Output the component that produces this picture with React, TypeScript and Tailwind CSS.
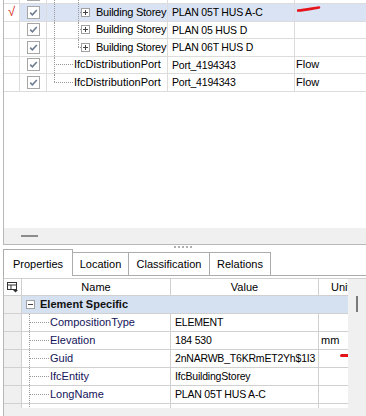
import React from "react";

type TreeRow = {
  kind: "storey" | "port" | "top";
  name: string;
  value: string;
  type: string;
  selected?: boolean;
  lastPort?: boolean;
  lastStorey?: boolean;
};

const treeRows: TreeRow[] = [
  { kind: "top", name: "", value: "", type: "" },
  { kind: "storey", name: "Building Storey", value: "PLAN 05T HUS A-C", type: "", selected: true },
  { kind: "storey", name: "Building Storey", value: "PLAN 05 HUS D", type: "" },
  { kind: "storey", name: "Building Storey", value: "PLAN 06T HUS D", type: "", lastStorey: true },
  { kind: "port", name: "IfcDistributionPort", value: "Port_4194343", type: "Flow" },
  { kind: "port", name: "IfcDistributionPort", value: "Port_4194343", type: "Flow", lastPort: true },
];

const props = [
  { name: "CompositionType", value: "ELEMENT", unit: "" },
  { name: "Elevation", value: "184 530", unit: "mm" },
  { name: "Guid", value: "2nNARWB_T6KRmET2Yh$1I3", unit: "" },
  { name: "IfcEntity", value: "IfcBuildingStorey", unit: "" },
  { name: "LongName", value: "PLAN 05T HUS A-C", unit: "" },
  { name: "", value: "", unit: "" },
];

function CheckBox() {
  return (
    <svg width="13" height="13" viewBox="0 0 13 13">
      <rect x="0.5" y="0.5" width="12" height="12" fill="#fff" stroke="#a6a6a6" />
      <path d="M3.2 6.6 L5.4 8.8 L9.8 3.9" fill="none" stroke="#6d7b90" strokeWidth="1.5" />
    </svg>
  );
}

function ExpandBox({ minus }: { minus?: boolean }) {
  return (
    <svg width="9" height="9" viewBox="0 0 9 9">
      <rect x="0.5" y="0.5" width="8" height="8" fill="#fff" stroke="#a0a0a0" />
      <path d="M2 4.5 H7" stroke="#444" />
      {!minus && <path d="M4.5 2 V7" stroke="#444" />}
    </svg>
  );
}

function GridIcon() {
  return (
    <svg width="11" height="11" viewBox="0 0 11 11">
      <rect x="0.5" y="0.5" width="9" height="7" fill="#fff" stroke="#333" />
      <path d="M0.5 3 H9.5 M4 3 V7.5" stroke="#333" />
      <path d="M6 8 H11 L8.5 10.5 Z" fill="#333" />
    </svg>
  );
}

function NameCell({ row }: { row: TreeRow }) {
  return (
    <div className="relative w-[121px] h-full border-r border-[#dcdcdc] overflow-hidden">
      {/* main trunk */}
      <div
        className={`absolute left-[7px] top-0 border-l border-dotted border-[#9a9a9a] ${
          row.lastPort ? "h-1/2" : "h-full"
        }`}
      />
      {row.kind !== "port" && (
        <div
          className={`absolute left-[31px] top-0 border-l border-dotted border-[#9a9a9a] ${
            row.lastStorey ? "h-1/2" : "h-full"
          }`}
        />
      )}
      {row.kind === "storey" && (
        <div className="flex items-center h-full pl-[31px]">
          <div className="w-[3px] border-t border-dotted border-[#9a9a9a]" />
          <div className="flex items-center">
            <ExpandBox />
          </div>
          <span className="pl-[6px] whitespace-nowrap tracking-[-0.25px]">{row.name}</span>
        </div>
      )}
      {row.kind === "port" && (
        <div className="flex items-center h-full pl-[7px]">
          <div className="w-[19px] border-t border-dotted border-[#9a9a9a]" />
          <span className="pl-[1px] whitespace-nowrap">{row.name}</span>
        </div>
      )}
    </div>
  );
}

export default function App() {
  return (
    <div className="w-[366px] h-[416px] overflow-hidden bg-white text-[11px] leading-none text-black font-['Liberation_Sans',Arial,sans-serif]">
      {/* tree panel */}
      <div className="ml-[3px] h-[245px] flex flex-col border-l border-b border-[#b8b8b8]">
        <div className="flex-1 overflow-hidden">
          <div className="-mt-[13.5px]">
            {treeRows.map((row, i) => (
              <div key={i} className="flex h-[17.5px]">
                <div className="w-[16px] h-full border-r border-b border-[#dcdcdc] flex items-center justify-center">
                  {row.selected && (
                    <span className="text-[13px] text-[#d42a10] -mt-[1px]">√</span>
                  )}
                </div>
                <div
                  className={`flex flex-1 h-full border-b border-[#dcdcdc] ${
                    row.selected ? "bg-[#d9e3f3]" : ""
                  }`}
                >
                  <div className="w-[27px] h-full border-r border-[#dcdcdc] flex items-center pl-[7px]">
                    <CheckBox />
                  </div>
                  <NameCell row={row} />
                  <div className="w-[127px] h-full border-r border-[#dcdcdc] flex items-center pl-[4px] whitespace-nowrap text-[10.5px] tracking-[-0.2px]">
                    {row.value}
                  </div>
                  <div className="flex-1 h-full flex items-center pl-[1px] relative">
                    {row.type}
                    {row.selected && (
                      <svg className="absolute left-[2px] top-[1px]" width="24" height="8" viewBox="0 0 24 8">
                        <path d="M1 5.5 C8 5 15 3.5 22 2.5" stroke="#e5141b" strokeWidth="2.6" strokeLinecap="round" fill="none" />
                      </svg>
                    )}
                  </div>
                </div>
              </div>
            ))}
          </div>
        </div>
        <div className="h-[16px] bg-[#f0f0f0] flex items-center pl-[17px]">
          <div className="w-[17px] h-[2px] bg-[#8c8c8c]" />
        </div>
      </div>

      {/* splitter */}
      <div className="h-[4px] flex justify-center items-start pt-[1px] gap-[2px]">
        {[0, 1, 2, 3, 4].map((d) => (
          <div key={d} className="w-[2px] h-[2px] bg-[#b0b0b0]" />
        ))}
      </div>

      {/* tabs */}
      <div className="ml-[3px] h-[27px] flex items-end border-b border-[#acacac]">
        <div className="w-[70px] h-[27px] -mb-px bg-white border-l border-t border-r border-[#acacac] flex items-center justify-center pt-[2px]">
          Properties
        </div>
        <div className="w-[56px] h-[23px] border-t border-r border-[#acacac] flex items-center justify-center pt-[1px]">
          Location
        </div>
        <div className="w-[81px] h-[23px] border-t border-r border-[#acacac] flex items-center justify-center pt-[1px]">
          Classification
        </div>
        <div className="w-[61px] h-[23px] border-t border-r border-[#acacac] flex items-center justify-center pt-[1px]">
          Relations
        </div>
      </div>

      {/* property grid */}
      <div className="ml-[3px] h-[140px] border-l border-[#b8b8b8] pt-[2px] flex flex-col">
        <div className="flex h-[130px] border-t border-[#d0d0d0]">
          <div className="flex-1 overflow-hidden flex flex-col">
            {/* header */}
            <div className="flex h-[17px] border-b border-[#d0d0d0] shrink-0">
              <div className="w-[18px] border-r border-[#d0d0d0] flex items-center justify-center">
                <GridIcon />
              </div>
              <div className="w-[149px] border-r border-[#d0d0d0] flex items-center justify-center">
                Name
              </div>
              <div className="w-[148px] border-r border-[#d0d0d0] flex items-center justify-center">
                Value
              </div>
              <div className="flex-1 flex items-center pl-[12px] whitespace-nowrap overflow-hidden">Unit</div>
            </div>
            {/* category */}
            <div className="flex h-[18px] border-b border-[#d0d0d0] shrink-0">
              <div className="w-[18px] bg-[#f0f0f0] border-r border-[#d0d0d0]" />
              <div className="flex-1 bg-[#d5e0f1] flex items-center pl-[4px]">
                <ExpandBox minus />
                <span className="pl-[5px] font-bold text-[#111]">Element Specific</span>
              </div>
            </div>
            {props.map((p, i) => (
              <div key={i} className="flex h-[18px] border-b border-[#d0d0d0] shrink-0">
                <div className="w-[18px] bg-[#f0f0f0] border-r border-[#d0d0d0]" />
                <div className="relative w-[149px] border-r border-[#d0d0d0] flex items-center">
                  <div className="absolute left-[7px] top-0 h-full border-l border-dotted border-[#9a9a9a]" />
                  {p.name && (
                    <>
                      <div className="ml-[7px] w-[20px] border-t border-dotted border-[#9a9a9a]" />
                      <span className="pl-[1px] text-[#14145a] whitespace-nowrap">{p.name}</span>
                    </>
                  )}
                </div>
                <div className="w-[148px] border-r border-[#d0d0d0] flex items-center pl-[4px] whitespace-nowrap text-[10.5px] tracking-[-0.2px]">
                  {p.value}
                </div>
                <div className="flex-1 flex items-center pl-[2px] relative">
                  {p.unit}
                  {p.name === "Guid" && (
                    <svg className="absolute left-[21px] top-[3px]" width="16" height="5" viewBox="0 0 16 5">
                      <path d="M1.5 2.5 H14.5" stroke="#e5141b" strokeWidth="3" strokeLinecap="round" />
                    </svg>
                  )}
                </div>
              </div>
            ))}
          </div>
          {/* vertical scrollbar */}
          <div className="w-[18px] bg-[#f0f0f0] flex justify-center pt-[17px]">
            <div className="w-[2px] h-[16px] bg-[#7a7a7a]" />
          </div>
        </div>
        <div className="flex-1 bg-[#f0f0f0]" />
      </div>
    </div>
  );
}
